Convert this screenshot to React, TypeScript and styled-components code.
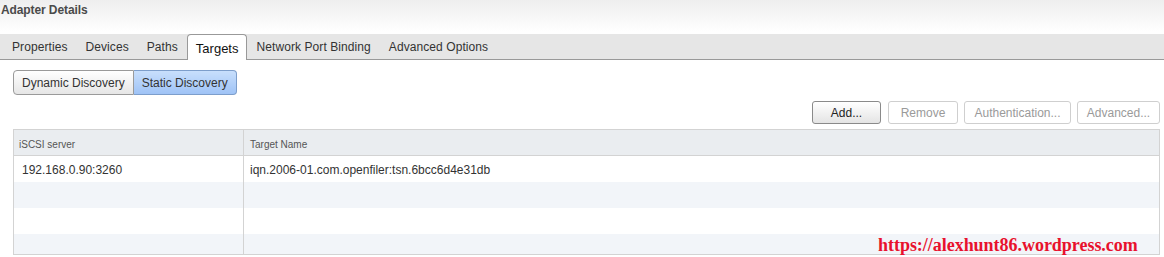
import React from "react";
import styled, { createGlobalStyle } from "styled-components";

const GlobalStyle = createGlobalStyle`
  body {
    margin: 0;
    background: #fff;
    font-family: "Liberation Sans", Arial, sans-serif;
    font-size: 12px;
    color: #333;
  }
`;

const Page = styled.div`
  width: 1164px;
  height: 257px;
  overflow: hidden;
  position: relative;
`;

const Header = styled.div`
  height: 34px;
  box-sizing: border-box;
  padding: 3px 0 0 1px;
  background: linear-gradient(#eeeeee, #ffffff 32px);
  font-weight: bold;
  color: #4a4a4a;
  line-height: 14px;
  letter-spacing: -0.1px;
`;

const TabBar = styled.div`
  display: flex;
  align-items: flex-end;
  height: 26px;
  box-sizing: border-box;
  padding-left: 3px;
  background: #e6e6e6;
  border-bottom: 1px solid #999;
`;

const Tab = styled.div<{ active?: boolean }>`
  height: 25px;
  box-sizing: border-box;
  padding: 0 9px;
  line-height: 27px;
  color: #333;
  letter-spacing: 0.08px;
  white-space: nowrap;
  ${(p) =>
    p.active &&
    `
    background: #fff;
    color: #111;
    border: 1px solid #999;
    border-bottom: none;
    border-radius: 4px 4px 0 0;
    margin-bottom: -1px;
    height: 26px;
    padding: 0 8px;
    line-height: 27px;
    font-size: 13px;
    letter-spacing: 0;
  `}
`;

const Body = styled.div`
  padding: 10px 4px 0 13px;
`;

const Segmented = styled.div`
  display: inline-flex;
  height: 25px;
`;

const SegButton = styled.div<{ selected?: boolean; first?: boolean }>`
  box-sizing: border-box;
  height: 25px;
  line-height: 25px;
  padding: 0 8px;
  color: #333;
  border: 1px solid ${(p) => (p.selected ? "#7d9ecb" : "#9a9a9a")};
  border-radius: ${(p) => (p.first ? "4px 0 0 4px" : "0 4px 4px 0")};
  ${(p) => (p.first ? "" : "border-left: none;")}
  background: ${(p) =>
    p.selected
      ? "linear-gradient(#c8dffc, #9fc3f6)"
      : "linear-gradient(#ffffff, #e6e6e6)"};
  white-space: nowrap;
`;

const Actions = styled.div`
  display: flex;
  justify-content: flex-end;
  gap: 6px;
  margin-top: 6px;
`;

const ActionButton = styled.div<{ disabled?: boolean; w: number }>`
  box-sizing: border-box;
  width: ${(p) => p.w}px;
  height: 23px;
  line-height: 22px;
  text-align: center;
  border-radius: 3px;
  border: 1px solid ${(p) => (p.disabled ? "#cfcfcf" : "#8a8a8a")};
  color: ${(p) => (p.disabled ? "#9a9a9a" : "#222")};
  background: ${(p) =>
    p.disabled ? "#fff" : "linear-gradient(#ffffff, #e4e4e4)"};
  &:first-child {
    margin-right: 1px;
  }
`;

const Table = styled.div`
  margin-top: 5px;
  width: 1147px;
  box-sizing: border-box;
  border: 1px solid #d3d3d3;
  height: 126px;
  overflow: hidden;
`;

const Row = styled.div<{ head?: boolean; alt?: boolean }>`
  display: grid;
  grid-template-columns: 229px 1fr;
  height: 26px;
  box-sizing: border-box;
  background: ${(p) => (p.head ? "#eaedf0" : p.alt ? "#f2f5f9" : "#fff")};
  ${(p) => (p.head ? "border-bottom: 1px solid #d3d3d3;" : "")}
`;

const Cell = styled.div<{ head?: boolean }>`
  padding-left: ${(p) => (p.head ? "5px" : "8px")};
  line-height: ${(p) => (p.head ? "29px" : "28px")};
  font-size: ${(p) => (p.head ? "10px" : "12px")};
  color: ${(p) => (p.head ? "#555" : "#333")};
  white-space: nowrap;
  & + & {
    border-left: 1px solid #d3d3d3;
    padding-left: ${(p) => (p.head ? "4px" : "6px")};
  }
`;

const Watermark = styled.div`
  position: absolute;
  left: 878px;
  top: 235px;
  font-family: "Liberation Serif", "Times New Roman", serif;
  font-weight: bold;
  font-size: 18px;
  letter-spacing: -0.03px;
  color: #e8112d;
  white-space: nowrap;
`;

const tabs = [
  "Properties",
  "Devices",
  "Paths",
  "Targets",
  "Network Port Binding",
  "Advanced Options",
];

const rows = [
  ["192.168.0.90:3260", "iqn.2006-01.com.openfiler:tsn.6bcc6d4e31db"],
  ["", ""],
  ["", ""],
  ["", ""],
];

export default function App() {
  return (
    <Page>
      <GlobalStyle />
      <Header>Adapter Details</Header>
      <TabBar>
        {tabs.map((t) => (
          <Tab key={t} active={t === "Targets"}>
            {t}
          </Tab>
        ))}
      </TabBar>
      <Body>
        <Segmented>
          <SegButton first>Dynamic Discovery</SegButton>
          <SegButton selected>Static Discovery</SegButton>
        </Segmented>
        <Actions>
          <ActionButton w={69}>Add...</ActionButton>
          <ActionButton w={70} disabled>
            Remove
          </ActionButton>
          <ActionButton w={107} disabled>
            Authentication...
          </ActionButton>
          <ActionButton w={83} disabled>
            Advanced...
          </ActionButton>
        </Actions>
        <Table>
          <Row head>
            <Cell head>iSCSI server</Cell>
            <Cell head>Target Name</Cell>
          </Row>
          {rows.map((r, i) => (
            <Row key={i} alt={i % 2 === 1}>
              <Cell>{r[0]}</Cell>
              <Cell>{r[1]}</Cell>
            </Row>
          ))}
        </Table>
      </Body>
      <Watermark>https://alexhunt86.wordpress.com</Watermark>
    </Page>
  );
}
